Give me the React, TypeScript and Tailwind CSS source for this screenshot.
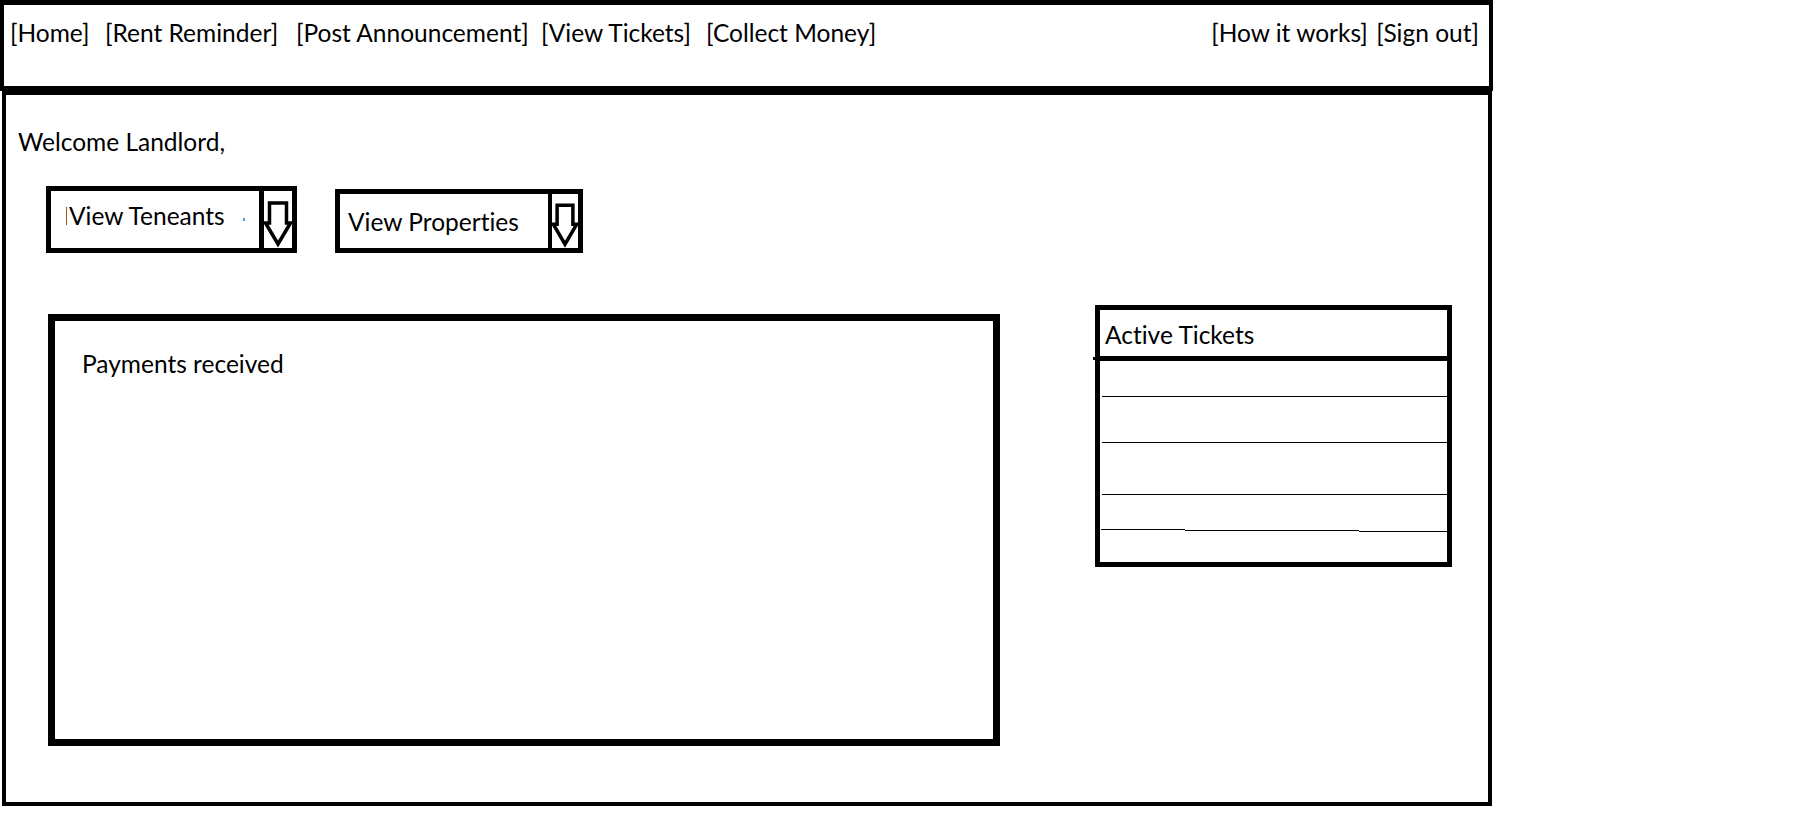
import React from 'react'

const leftLinks = [
    { label: '[Home]', w: 'w-[95px]' },
    { label: '[Rent Reminder]', w: 'w-[191px]' },
    { label: '[Post Announcement]', w: 'w-[245px]' },
    { label: '[View Tickets]', w: 'w-[165px]' },
    { label: '[Collect Money]', w: '' },
]

// row heights of the ticket list, each but the last closed by a thin rule
const ticketRows = [36, 46, 52, 37]

function DownArrow() {
    return (
        <svg viewBox="0 0 28 57" preserveAspectRatio="none" className="w-full h-full">
            <path
                d="M5.5 12 H22.5 V32 H26.5 L14 53 L1.5 32 H5.5 Z"
                fill="white"
                stroke="black"
                strokeWidth="3.5"
                strokeLinejoin="miter"
                vectorEffect="non-scaling-stroke"
            />
        </svg>
    )
}

export default function App() {
    return (
        <div className="w-[1806px] h-[815px] bg-white text-black font-['Lato','Open_Sans',sans-serif] text-[24.5px] leading-[32px] [font-variant-ligatures:none] overflow-hidden">
            {/* Top nav */}
            <header className="w-[1493px] h-[91px] border-t-[5px] border-b-[5px] border-x-[4px] border-black flex justify-between pl-[6px] pr-[10px] pt-[12px]">
                <nav className="flex whitespace-nowrap">
                    {leftLinks.map((l) => (
                        <span key={l.label} className={l.w}>
                            {l.label}
                        </span>
                    ))}
                </nav>
                <nav className="flex whitespace-nowrap">
                    <span className="w-[165px]">[How it works]</span>
                    <span>[Sign out]</span>
                </nav>
            </header>

            {/* Main panel */}
            <main className="ml-[2px] w-[1490px] h-[715px] border-4 border-black pt-[31px]">
                <p className="pl-[12px]">Welcome Landlord,</p>

                {/* Dropdowns */}
                <div className="flex items-start mt-[28px] ml-[40px]">
                    <div className="flex w-[251px] h-[67px] border-[5px] border-black">
                        <div className="flex-1 flex items-center pl-[15px] pb-[8px]">
                            <span className="w-[1px] h-[18px] bg-[#a0521d] mr-[2px]" />
                            <span>View Teneants</span>
                            <span className="ml-[18px] mt-[8px] w-[2px] h-[3px] bg-[#5b9bd5]" />
                        </div>
                        <div className="w-[33px] border-l-[5px] border-black">
                            <DownArrow />
                        </div>
                    </div>
                    <div className="flex w-[248px] h-[64px] border-[5px] border-black ml-[38px] mt-[3px]">
                        <div className="flex-1 flex items-center pl-[8px] pt-[1px]">View Properties</div>
                        <div className="w-[30px] border-l-[4px] border-black">
                            <DownArrow />
                        </div>
                    </div>
                </div>

                {/* Payments + tickets */}
                <div className="flex items-start mt-[52px] ml-[42px]">
                    <section className="w-[952px] h-[432px] border-[7px] border-black mt-[9px] pt-[27px] pl-[27px]">
                        Payments received
                    </section>

                    <section className="w-[357px] h-[262px] border-[5px] border-black ml-[95px] flex flex-col">
                        <div className="relative h-[51px] border-b-[5px] border-black pt-[9px] pl-[5px]">
                            Active Tickets
                            <span className="absolute -left-[7px] -bottom-[4px] w-[3px] h-[3px] bg-black" />
                        </div>
                        {ticketRows.slice(0, 3).map((h, i) => (
                            <div
                                key={i}
                                className="ml-[2px] border-b-[1.5px] border-black"
                                style={{ height: h }}
                            />
                        ))}
                        <div className="ml-[1px] h-[37px] flex items-end">
                            <div className="w-[84px] h-[1.5px] bg-black mb-[2px]" />
                            <div className="w-[174px] h-[1.5px] bg-black mb-[1px]" />
                            <div className="flex-1 h-[1.5px] bg-black" />
                        </div>
                        <div className="flex-1" />
                    </section>
                </div>
            </main>
        </div>
    )
}
